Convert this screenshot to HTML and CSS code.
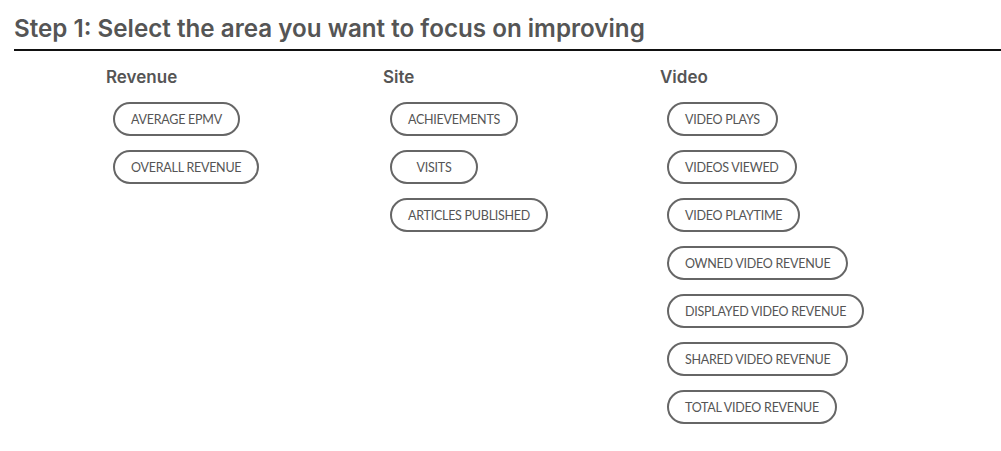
FILE: index.html
```html
<!DOCTYPE html>
<html lang="en">

<head>
    <meta charset="UTF-8">
    <meta name="viewport" content="width=device-width, initial-scale=1.0">
    <title>Step 1</title>
    <link rel="stylesheet" href="styles.css">
</head>

<body>
    <h1 class="step-title">Step 1: Select the area you want to focus on improving</h1>

    <div class="areas">
        <section class="area">
            <h2 class="area-title">Revenue</h2>
            <ul class="metrics">
                <li><button class="metric">AVERAGE EPMV</button></li>
                <li><button class="metric">OVERALL REVENUE</button></li>
            </ul>
        </section>
        <section class="area">
            <h2 class="area-title">Site</h2>
            <ul class="metrics">
                <li><button class="metric">ACHIEVEMENTS</button></li>
                <li><button class="metric">VISITS</button></li>
                <li><button class="metric">ARTICLES PUBLISHED</button></li>
            </ul>
        </section>
        <section class="area">
            <h2 class="area-title">Video</h2>
            <ul class="metrics">
                <li><button class="metric">VIDEO PLAYS</button></li>
                <li><button class="metric">VIDEOS VIEWED</button></li>
                <li><button class="metric">VIDEO PLAYTIME</button></li>
                <li><button class="metric">OWNED VIDEO REVENUE</button></li>
                <li><button class="metric">DISPLAYED VIDEO REVENUE</button></li>
                <li><button class="metric">SHARED VIDEO REVENUE</button></li>
                <li><button class="metric">TOTAL VIDEO REVENUE</button></li>
            </ul>
        </section>
    </div>
</body>

</html>
```

FILE: styles.css
```css
body {
    font-family: Inter, Roboto, "Liberation Sans", sans-serif;
    background-color: #fff;
    color: #555;
    margin: 0;
    padding: 0;
}

.step-title {
    margin: 0 0 0 14px;
    padding: 14px 0 6px;
    font-size: 24.2px;
    font-weight: 600;
    line-height: 29px;
    color: #555;
    border-bottom: 2px solid #111;
}

.areas {
    display: flex;
    padding-left: 106px;
}

.area {
    width: 277px;
}

.area-title {
    margin: 15px 0 14px;
    font-size: 17px;
    font-weight: 600;
    line-height: 22px;
    color: #555;
}

.metrics {
    list-style: none;
    margin: 0;
    padding: 0 0 0 7px;
    display: flex;
    flex-direction: column;
    align-items: flex-start;
    gap: 14px;
}

.metric {
    font-family: Lato, sans-serif;
    font-size: 12.5px;
    letter-spacing: -0.25px;
    color: #555;
    background: #fff;
    height: 34px;
    min-width: 88px;
    padding: 0 16px;
    border: 2px solid #666;
    border-radius: 17px;
    cursor: pointer;
}

.metric:hover {
    background-color: #f5f5f5;
}
```
